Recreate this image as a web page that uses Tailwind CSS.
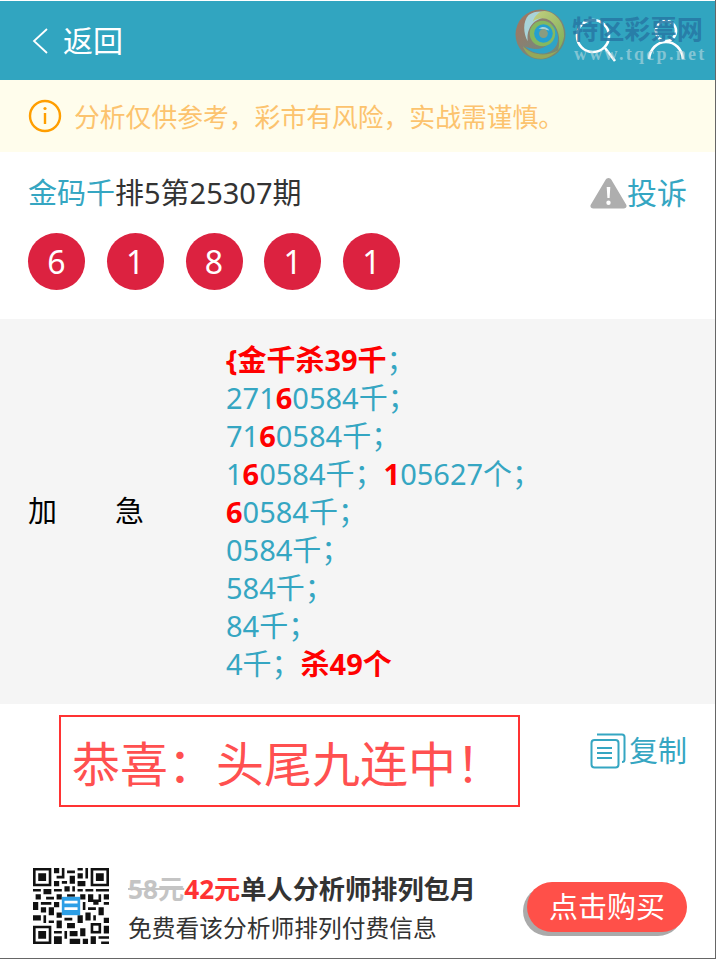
<!doctype html>
<html lang="zh-CN">

<head>
  <meta charset="UTF-8" />
  <meta name="viewport" content="width=device-width, initial-scale=1" />
  <title>金码千排5第25307期</title>
  <script src="https://cdn.jsdelivr.net/npm/@tailwindcss/browser@4"></script>
</head>

<body class="bg-white font-['Noto_Sans','Noto_Sans_CJK_SC',sans-serif] text-[29px] leading-[38px]">
  <div class="relative h-[959px] overflow-hidden border-r border-b border-[#666] pt-px">
    <!-- Header -->
    <header class="flex h-[79px] items-center justify-between bg-[#31a5c0] pl-[32px] pr-[30px] text-white">
      <div class="flex items-center gap-[15px]">
        <svg class="h-[28px] w-[16px]" viewBox="0 0 16 28" fill="none" stroke="currentColor" stroke-width="1.800"><path d="M15 2 2 14l13 12" /></svg>
        <span class="text-[30px]">返回</span>
      </div>
      <div class="flex items-center gap-[30px]">
        <svg class="h-[48px] w-[42px]" viewBox="0 0 42 48" fill="none" stroke="currentColor" stroke-width="2.600"><circle cx="18" cy="19" r="16" /><path d="m30 31 10 13" /></svg>
        <svg class="h-[48px] w-[38px]" viewBox="0 0 38 48" fill="none" stroke="currentColor" stroke-width="2.600"><circle cx="19" cy="14" r="10" /><path d="M2 42c1-10 8-17 17-17s16 7 17 17" /></svg>
      </div>
    </header>

    <!-- Notice -->
    <div class="flex h-[72px] items-center gap-[12px] bg-[#fffdec] pl-[28px] text-[25.800px] text-[#fcc36e]">
      <svg class="h-[34px] w-[34px]" viewBox="0 0 34 34" fill="none" stroke="#ff9e00" stroke-width="2.400"><circle cx="17" cy="17" r="15" /><path d="M17 14v11" /><circle cx="17" cy="9.500" r="1.600" fill="#ff9e00" stroke="none" /></svg>
      <span class="mt-[2px]">分析仅供参考，彩市有风险，实战需谨慎。</span>
    </div>

    <!-- Issue -->
    <section class="h-[167px] px-[28px] pt-[22px]">
      <div class="flex items-center justify-between">
        <h1 class="font-normal text-[#333]"><span class="text-[#35a6c2]">金码千</span>排5第25307期</h1>
        <a class="flex items-center text-[30px] text-[#35a6c2]">
          <svg class="h-[32px] w-[37px]" viewBox="0 0 37 32"><path fill="#aeaeae" fill-rule="evenodd" d="M18.500 1c1.300 0 2.200.7 2.900 1.800l14.700 24.600c1.200 2 0 4.100-2.400 4.100H3.300c-2.400 0-3.600-2.100-2.400-4.100L15.600 2.800C16.300 1.700 17.200 1 18.500 1zM16.700 10l.7 11h2.200l.7-11zM18.500 23.500a2.200 2.200 0 1 0 0 4.400 2.200 2.200 0 0 0 0-4.400z" /></svg>
          <span>投诉</span>
        </a>
      </div>
      <div class="mt-[21px] flex gap-[21.750px] text-[32px] text-white">
        <span class="flex h-[57px] w-[57px] items-center justify-center rounded-full bg-[#dc2240]">6</span>
        <span class="flex h-[57px] w-[57px] items-center justify-center rounded-full bg-[#dc2240]">1</span>
        <span class="flex h-[57px] w-[57px] items-center justify-center rounded-full bg-[#dc2240]">8</span>
        <span class="flex h-[57px] w-[57px] items-center justify-center rounded-full bg-[#dc2240]">1</span>
        <span class="flex h-[57px] w-[57px] items-center justify-center rounded-full bg-[#dc2240]">1</span>
      </div>
    </section>

    <!-- Content -->
    <section class="flex h-[385px] items-center bg-[#f5f5f5] pl-[28px]">
      <div class="mb-[2px] w-[198px] shrink-0 text-black">加&emsp;&emsp;急</div>
      <div class="text-[#35a6c2]">
        <div><b class="text-[#ff0000]">{金千杀39千</b>；</div>
        <div>271<b class="text-[#ff0000]">6</b>0584千；</div>
        <div>71<b class="text-[#ff0000]">6</b>0584千；</div>
        <div>1<b class="text-[#ff0000]">6</b>0584千；<b class="text-[#ff0000]">1</b>05627个；</div>
        <div><b class="text-[#ff0000]">6</b>0584千；</div>
        <div>0584千；</div>
        <div>584千；</div>
        <div>84千；</div>
        <div>4千；<b class="text-[#ff0000]">杀49个</b></div>
      </div>
    </section>

    <!-- Result -->
    <section class="flex h-[164px] items-start justify-between pl-[59px] pr-[28px] pt-[11px]">
      <div class="flex h-[92px] w-[461px] items-center border-2 border-[#ff3333] pl-[11px] pt-[6px] text-[48px] text-[#ff5050]">恭喜：头尾九连中！</div>
      <a class="mt-[17px] flex items-center gap-[3px] text-[#35a6c2]">
        <svg class="h-[36px] w-[36px]" viewBox="0 0 36 36" fill="none" stroke="currentColor" stroke-width="2"><rect x="1.500" y="7" width="27" height="27.500" rx="3" /><path d="M7 1.500h25a2.500 2.500 0 0 1 2.500 2.500v22.500a2.500 2.500 0 0 1-2.500 2.500M7 15h15M7 20h15M7 25h15" /></svg>
        <span>复制</span>
      </a>
    </section>

    <!-- Buy bar -->
    <footer class="flex h-[76px] items-center pl-[33px] pr-[28px]">
      <svg class="h-[76px] w-[76px] shrink-0" viewBox="0 0 29 29">
        <path fill="#111" fill-rule="evenodd" d="M0 0h7v7H0zM1 1v5h5V1zM2 2h3v3H2zM22 0h7v7h-7zM23 1v5h5V1zM24 2h3v3h-3zM0 22h7v7H0zM1 23v5h5v-5zM2 24h3v3H2z" />
        <path fill="#111" d="M8 0h2v2H8zM11 0h1v3h-1zM13 1h3v1h-3zM17 0h2v1h-2zM20 0h1v4h-1zM9 3h3v1H9zM14 3h2v3h-2zM17 2h2v2h-2zM8 5h2v2H8zM11 5h2v1h-2zM17 5h3v2h-3zM12 7h2v2h-2zM15 7h1v2h-1zM0 8h3v1H0zM4 8h3v2H4zM8 8h3v1H8zM17 8h2v1h-2zM20 8h3v1h-3zM24 8h5v1h-5zM1 10h2v2H1zM5 11h3v1H5zM9 10h2v2H9zM13 10h3v1h-3zM18 10h2v2h-2zM21 10h2v3h-2zM25 10h1v3h-1zM27 10h2v2h-2zM0 13h2v3H0zM3 13h4v1H3zM8 13h2v2H8zM19 13h1v3h-1zM23 12h2v2h-2zM27 13h2v1h-2zM3 15h2v2H3zM6 15h2v3H6zM21 15h3v1h-3zM25 15h2v3h-2zM0 18h3v2H0zM4 18h1v3H4zM9 17h2v2H9zM12 19h3v1h-3zM17 18h2v3h-2zM20 17h2v3h-2zM23 18h1v2h-1zM27 19h2v2h-2zM6 20h2v1H6zM9 20h2v3H9zM13 21h3v2h-3zM22 21h4v4h-4zM27 22h2v3h-2zM8 24h3v1H8zM12 24h1v3h-1zM14 24h3v2h-3zM18 23h2v3h-2zM8 26h3v3H8zM14 27h4v2h-4zM19 27h2v2h-2zM22 26h2v3h-2zM25 26h4v1h-4zM26 28h3v1h-3z" />
        <path fill="#fff" d="M23 22h2v2h-2z" />
        <rect x="11" y="11" width="7" height="7" fill="#2d9fe6" />
        <path fill="#fff" d="M12 12.500h5v1h-5zM12 15h5v1h-5z" />
      </svg>
      <div class="ml-[19px] mt-[8px] flex-1">
        <div class="text-[26.200px] font-bold leading-[36px] text-[#333]"><span class="text-[#c4c4c4] line-through">58元</span><span class="text-[#ff3333]">42元</span>单人分析师排列包月</div>
        <div class="text-[23.750px] leading-[42px] text-[#333]">免费看该分析师排列付费信息</div>
      </div>
      <button class="mt-[2px] flex h-[50px] w-[160px] items-center justify-center rounded-full bg-[#ff5049] text-white shadow-[-4px_4px_0_#aaa]">点击购买</button>
    </footer>

    <!-- Watermark over the header -->
    <div class="absolute left-[515px] top-[9px] flex items-start gap-[6px]">
      <svg class="h-[51px] w-[51px] shrink-0" viewBox="0 0 52 52">
        <defs>
          <linearGradient id="swirlBase" x1="0" y1="0" x2="1" y2="1"><stop offset="0" stop-color="#a8745c" /><stop offset=".55" stop-color="#7f8478" /><stop offset="1" stop-color="#6f8a70" /></linearGradient>
          <linearGradient id="swirlGreen" x1="0" y1="0" x2="1" y2="1"><stop offset="0" stop-color="#c4d080" /><stop offset="1" stop-color="#7fae58" /></linearGradient>
        </defs>
        <circle cx="26" cy="26" r="25.500" fill="url(#swirlBase)" />
        <path fill="#a9d3d8" d="M14 6C24-1 40 3 46 14 38 7 28 7 20 13 14 18 12 26 13 33 8 24 8 12 14 6z" />
        <path fill="url(#swirlGreen)" d="M30 2c12 1 21 13 20 26-1 6-3 10-6 14 3-12 0-24-8-30-6-4-14-3-18 1 2-6 7-11 12-11z" />
        <path fill="#2fa3c6" d="M38 16c8 8 8 20 0 26-8 6-20 4-28-4 8 4 18 4 24-2 5-5 7-14 4-20z" />
        <path fill="#94a85a" d="M8 38c8 8 22 12 36 4-8 8-16 10-24 8-6-2-10-6-12-12z" />
        <circle cx="28" cy="25" r="13" fill="#84b860" />
        <circle cx="29" cy="25" r="9.500" fill="#25a0d0" />
        <path fill="#a9d3d8" d="M24 20c4-3 9-2 11 2-3-1-7-1-11-2z" />
        <circle cx="29" cy="25" r="4.500" fill="#8a9c80" />
      </svg>
      <div class="pt-[6px]">
        <div class="text-[26.200px] font-bold leading-[28px] text-[#2779a5]/90">特区彩票网</div>
        <div class="ml-[2px] mt-[2px] font-['Liberation_Serif',serif] text-[18px] font-bold leading-[18px] tracking-[2.300px] whitespace-nowrap text-[#bcdbe2]/60">www.tqcp.net</div>
      </div>
    </div>
  </div>
</body>

</html>
